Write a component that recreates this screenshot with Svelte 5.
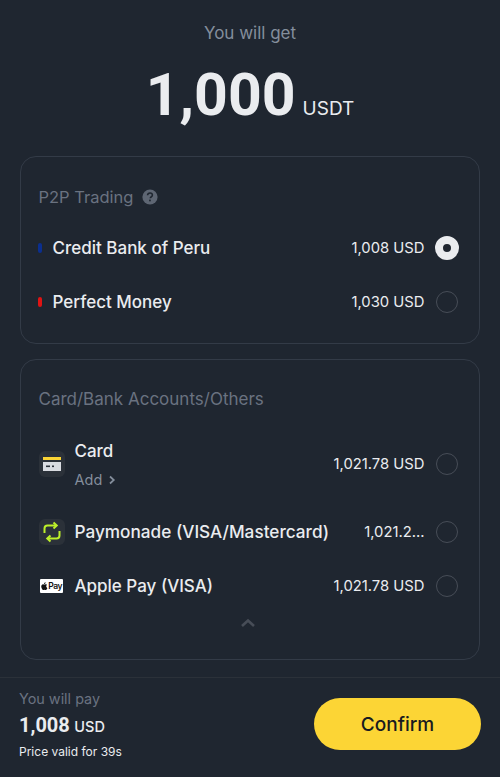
<script>
  const p2p = [
    { name: 'Credit Bank of Peru', price: '1,008 USD', color: '#0b2f8f', on: true },
    { name: 'Perfect Money', price: '1,030 USD', color: '#e01414', on: false }
  ];
</script>

<div class="page">
  <main class="content">
    <div class="get">You will get</div>
    <div class="amount"><span class="big">1,000</span><span class="unit">USDT</span></div>

    <section class="card first">
      <div class="title">P2P Trading
        <svg class="help" viewBox="0 0 16 16" width="16" height="16"><circle cx="8" cy="8" r="7.6" fill="#5e6673"/><path d="M5.6 6.2c0-1.4 1-2.2 2.4-2.2s2.4.8 2.4 2.1c0 1-.6 1.5-1.3 1.9-.6.4-.8.6-.8 1.3" fill="none" stroke="#1f2630" stroke-width="1.6"/><rect x="7.1" y="10.6" width="1.7" height="1.7" fill="#1f2630"/></svg>
      </div>
      {#each p2p as r}
        <div class="row p2p">
          <span class="dot" style="background:{r.color}"></span>
          <span class="name">{r.name}</span>
          <span class="price">{r.price}</span>
          <span class="radio" class:on={r.on}></span>
        </div>
      {/each}
    </section>

    <section class="card second">
      <div class="title">Card/Bank Accounts/Others</div>

      <div class="row cardrow">
        <span class="icon tile">
          <svg viewBox="0 0 26 26" width="26" height="26">
            <rect x="4" y="6" width="18" height="3" fill="#fcd535"/>
            <rect x="4" y="11" width="18" height="9" fill="#d9dce1"/>
            <rect x="7" y="14.5" width="4" height="1.6" fill="#2b3139"/>
            <rect x="13" y="14.5" width="2" height="1.6" fill="#2b3139"/>
          </svg>
        </span>
        <span class="stack">
          <span class="name">Card</span>
          <span class="add">Add
            <svg viewBox="0 0 10 10" width="10" height="10"><path d="M3 1.5 6.8 5 3 8.5" fill="none" stroke="#848e9c" stroke-width="1.7"/></svg>
          </span>
        </span>
        <span class="price">1,021.78 USD</span>
        <span class="radio"></span>
      </div>

      <div class="row method paymonade">
        <span class="icon tile">
          <svg viewBox="0 0 26 26" width="26" height="26" fill="none" stroke="#bdf02a" stroke-width="2">
            <path d="M5.500 14V9.500A3 3 0 0 1 8.500 6.500H17"/>
            <path d="m14.500 3.600 3.200 2.900-3.200 2.900"/>
            <path d="M20.500 12v4.500a3 3 0 0 1-3 3H9"/>
            <path d="M11.500 16.600 8.300 19.500l3.200 2.900"/>
          </svg>
        </span>
        <span class="name">Paymonade (VISA/Mastercard)</span>
        <span class="price trunc">1,021.2...</span>
        <span class="radio"></span>
      </div>

      <div class="row method applepay">
        <span class="icon"><span class="apple">
          <svg viewBox="0 0 10 12" width="7" height="8"><path d="M7.600 6.400c0-1.300 1-1.900 1.100-2-.6-.9-1.500-1-1.900-1-.8-.1-1.600.5-2 .5s-1.100-.5-1.800-.5C2 3.400 1.100 4 .6 4.900c-1 1.700-.3 4.300.7 5.700.5.7 1 1.400 1.800 1.400.7 0 1-.5 1.900-.5s1.100.5 1.900.5 1.300-.7 1.700-1.400c.5-.8.8-1.600.8-1.600-.1 0-1.800-.7-1.800-2.600zM6.100 2.200c.4-.5.7-1.200.6-1.900-.6 0-1.300.4-1.700.9-.4.4-.7 1.100-.6 1.800.6 0 1.300-.3 1.700-.8z" fill="#111"/></svg>Pay</span></span>
        <span class="name">Apple Pay (VISA)</span>
        <span class="price">1,021.78 USD</span>
        <span class="radio"></span>
      </div>

      <div class="chev">
        <svg viewBox="0 0 16 10" width="16" height="10"><path d="M2 8 8 2.500 14 8" fill="none" stroke="#474d57" stroke-width="2.600"/></svg>
      </div>
    </section>
  </main>

  <footer class="foot">
    <div class="pay">
      <div class="paylabel">You will pay</div>
      <div class="payamount"><span class="paynum">1,008</span> <span class="payunit">USD</span></div>
      <div class="valid">Price valid for 39s</div>
    </div>
    <button class="confirm">Confirm</button>
  </footer>
</div>

<style>
  :global(body) {
    margin: 0;
    background: #1f2630;
  }
  .page {
    width: 500px;
    height: 777px;
    display: flex;
    flex-direction: column;
    background: #1f2630;
    color: #eaecef;
    font-family: "Inter", "Noto Sans", sans-serif;
    overflow: hidden;
  }
  .content {
    flex: 1;
    padding: 0 20px;
    min-height: 0;
  }
  .get {
    margin-top: 22px;
    text-align: center;
    font-size: 17px;
    line-height: 22px;
    color: #848e9c;
  }
  .amount {
    margin-top: 15px;
    height: 71px;
    display: flex;
    justify-content: center;
    align-items: baseline;
    gap: 7px;
    line-height: 71px;
  }
  .big {
    font-family: "Roboto", sans-serif;
    font-weight: 700;
    font-size: 59px;
    color: #eaecef;
  }
  .unit {
    font-size: 19px;
    font-weight: 400;
  }
  .card {
    border: 1px solid #333b47;
    border-radius: 16px;
    padding: 0 21.500px 0 17.500px;
    box-sizing: border-box;
  }
  .first {
    height: 188px;
    margin-top: 26px;
  }
  .second {
    height: 301px;
    margin-top: 15px;
  }
  .title {
    display: flex;
    align-items: center;
    gap: 9px;
    font-size: 16.500px;
    line-height: 24px;
    color: #6a7280;
  }
  .first .title {
    padding-top: 28px;
  }
  .second .title {
    font-size: 17px;
    padding-top: 27px;
  }
  .row {
    display: flex;
    align-items: center;
  }
  .p2p {
    height: 54px;
  }
  .first .title + .p2p {
    margin-top: 12px;
  }
  .dot {
    width: 4px;
    height: 10px;
    border-radius: 2px;
    margin-left: -1px;
    margin-right: 11px;
  }
  .name {
    font-size: 17px;
    font-weight: 500;
    line-height: 22px;
    color: #eaecef;
    white-space: nowrap;
  }
  .paymonade .name {
    font-size: 17.200px;
  }
  .price {
    margin-left: auto;
    font-size: 14.800px;
    color: #eaecef;
    white-space: nowrap;
  }
  .radio {
    width: 22px;
    height: 22px;
    margin-left: 11px;
    box-sizing: border-box;
    border: 1.500px solid #474d57;
    border-radius: 50%;
    flex: none;
  }
  .radio.on {
    border: 8px solid #eaecef;
    background: #1f2630;
    width: 24px;
    height: 24px;
    margin-right: -1px;
    margin-left: 10px;
  }
  .icon {
    width: 26px;
    height: 26px;
    margin-right: 10px;
    flex: none;
    display: flex;
    align-items: center;
    justify-content: center;
  }
  .tile {
    background: #2b3139;
    border-radius: 6px;
  }
  .cardrow {
    height: 62px;
    margin-top: 22px;
  }
  .stack {
    display: flex;
    flex-direction: column;
    gap: 9px;
  }
  .add {
    display: flex;
    align-items: center;
    gap: 5px;
    font-size: 14.500px;
    line-height: 18px;
    color: #848e9c;
  }
  .method {
    height: 54px;
  }
  .paymonade {
    margin-top: 10px;
  }
  .apple {
    width: 23px;
    height: 14px;
    box-sizing: border-box;
    background: #fff;
    border-radius: 1px;
    color: #111;
    font-size: 8.500px;
    font-weight: 600;
    line-height: 14px;
    letter-spacing: -0.4px;
    display: flex;
    align-items: center;
    justify-content: center;
    gap: 0.5px;
  }
  .chev {
    display: flex;
    justify-content: center;
    margin-top: 5px;
  }
  .foot {
    height: 100px;
    box-sizing: border-box;
    border-top: 1px solid #2b3139;
    padding: 11px 19px 0;
    display: flex;
    justify-content: space-between;
    align-items: flex-start;
  }
  .paylabel {
    font-size: 14.400px;
    line-height: 20px;
    color: #6a7280;
  }
  .payamount {
    margin-top: 4px;
    line-height: 24px;
  }
  .paynum {
    font-family: "Roboto", sans-serif;
    font-size: 20px;
    font-weight: 700;
  }
  .payunit {
    font-size: 14.500px;
    font-weight: 500;
  }
  .valid {
    margin-top: 4px;
    font-size: 12px;
    line-height: 18px;
  }
  .confirm {
    width: 167px;
    height: 52px;
    margin-top: 9px;
    border: none;
    border-radius: 26px;
    background: #fcd535;
    color: #181a20;
    font-family: inherit;
    font-size: 19px;
    font-weight: 500;
  }
</style>
